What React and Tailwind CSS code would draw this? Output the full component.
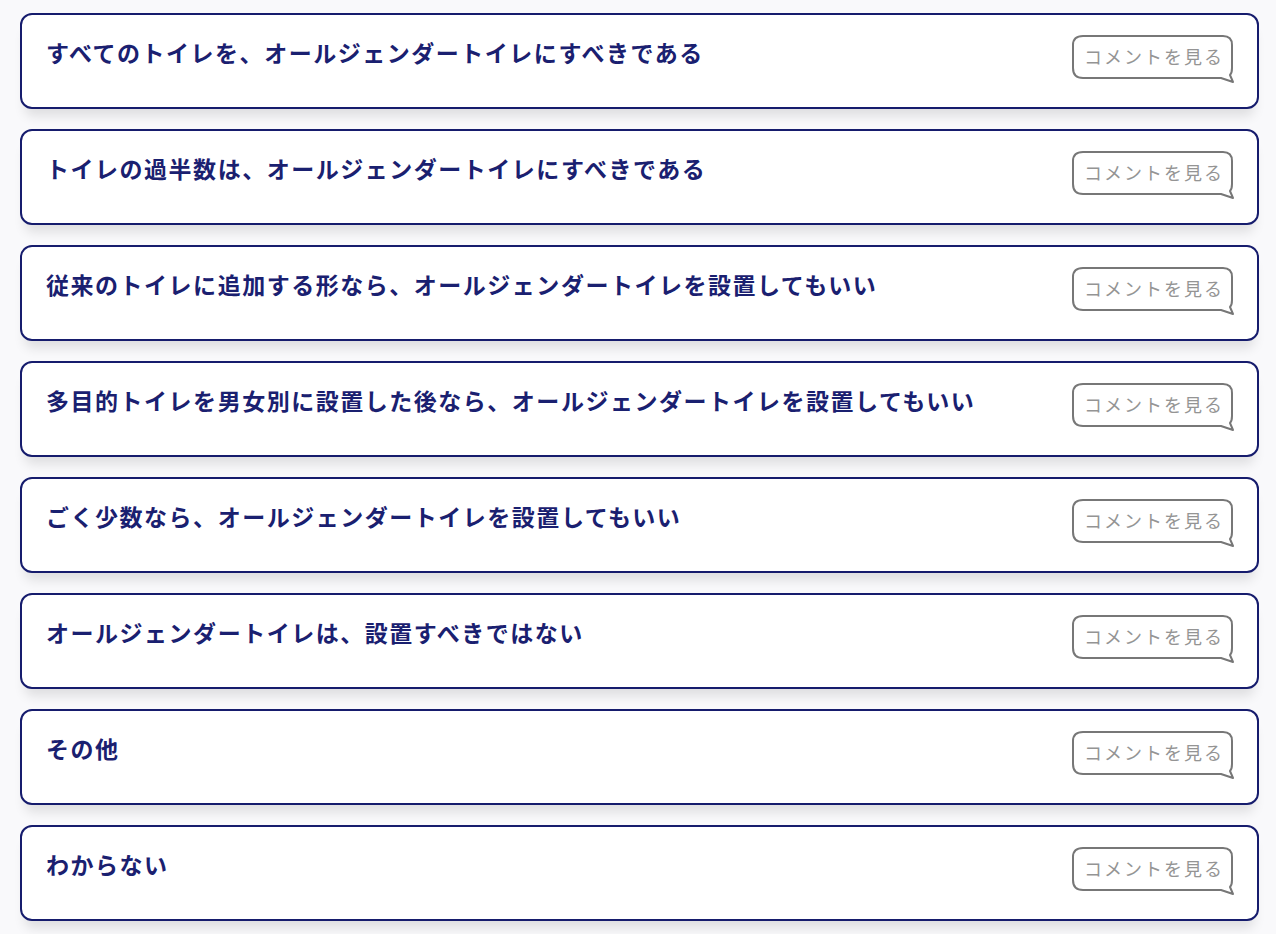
import React from 'react';

// 選択肢の一覧
const choices = [
  'すべてのトイレを、オールジェンダートイレにすべきである',
  'トイレの過半数は、オールジェンダートイレにすべきである',
  '従来のトイレに追加する形なら、オールジェンダートイレを設置してもいい',
  '多目的トイレを男女別に設置した後なら、オールジェンダートイレを設置してもいい',
  'ごく少数なら、オールジェンダートイレを設置してもいい',
  'オールジェンダートイレは、設置すべきではない',
  'その他',
  'わからない',
];

// 吹き出し型の「コメントを見る」ボタン
const CommentButton = () => (
  <button className="relative w-[163px] h-[50px] shrink-0 text-left">
    <svg
      className="absolute left-0 top-0"
      width="163"
      height="50"
      viewBox="0 0 163 50"
      fill="none"
    >
      <path
        d="M11 1 H151 Q160 1 160 10 V33 Q160 38 158 40 L161 47 L149 43 H11 Q1 43 1 33 V10 Q1 1 11 1 Z"
        fill="#ffffff"
        stroke="#777777"
        strokeWidth="2"
        strokeLinejoin="round"
      />
    </svg>
    <span className="absolute left-[12px] top-[8px] text-[18px] leading-[26px] tracking-[0.11em] text-[#949494]">
      コメントを見る
    </span>
  </button>
);

const App = () => {
  return (
    <div
      className="min-h-screen bg-[#f9f9fb] pt-[13px] pl-[20px] pr-[17px] pb-[20px]"
      style={{ fontFamily: '"Noto Sans CJK JP", "Noto Sans", sans-serif' }}
    >
      <div className="flex flex-col gap-[20px]">
        {choices.map((text) => (
          <div
            key={text}
            className="h-[96px] bg-white border-2 border-[#161c6d] rounded-[12px] shadow-[0_12px_12px_-5px_rgba(0,0,0,0.11)] flex items-start justify-between pl-[24px] pr-[22px] pt-[20px]"
          >
            <h2 className="mt-[3px] text-[23px] leading-[28px] font-bold tracking-[0.066em] text-[#1a2070]">
              {text}
            </h2>
            <CommentButton />
          </div>
        ))}
      </div>
    </div>
  );
};

export default App;
